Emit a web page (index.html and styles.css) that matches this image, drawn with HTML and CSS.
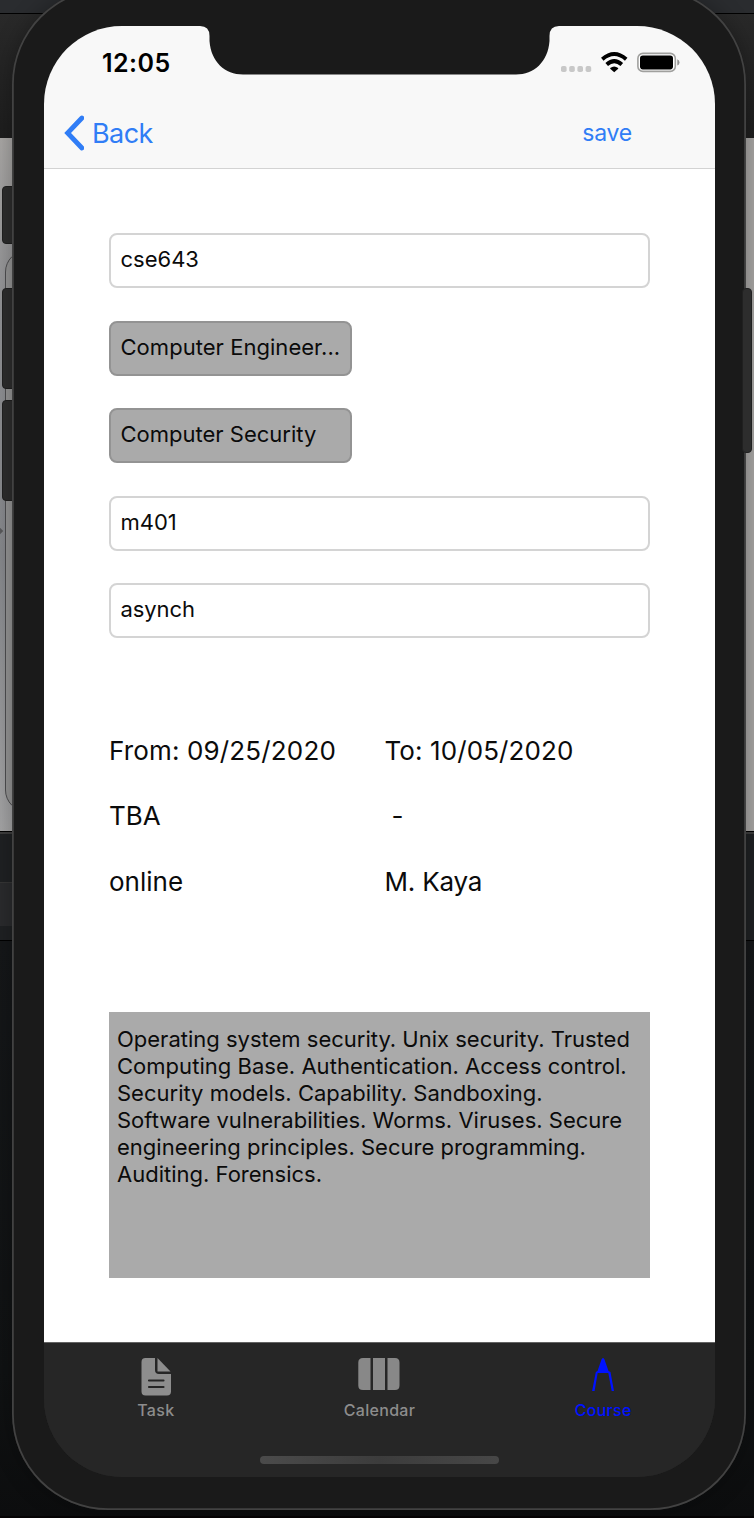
FILE: index.html
```html
<!DOCTYPE html>
<html lang="en">
<head>
<meta charset="utf-8">
<title>Course</title>
<link rel="stylesheet" href="styles.css">
</head>
<body>
<div class="stage">
  <div class="desk">
    <div class="band band-title"></div>
    <div class="band band-tools"></div>
    <div class="band band-photo"><div class="ghost-phone"></div><div class="ghost-mark"></div></div>
    <div class="band band-panel"><div class="panel-chip"></div></div>
    <div class="band band-base"></div>
  </div>
  <div class="key key-mute"></div>
  <div class="key key-up"></div>
  <div class="key key-down"></div>
  <div class="phone">
    <div class="screen">
      <header class="top">
        <div class="status">
          <span class="time">12:05</span>
          <svg class="indicators" width="120" height="24" viewBox="0 0 120 24">
            <g fill="#c8c8c8"><rect x="1" y="16" width="5.6" height="6" rx="1.8"/><rect x="9.2" y="16" width="5.6" height="6" rx="1.8"/><rect x="17.4" y="16" width="5.6" height="6" rx="1.8"/><rect x="25.6" y="16" width="5.6" height="6" rx="1.8"/></g>
            <g fill="none" stroke="#000" stroke-width="3.9"><path d="M42.3 9.2Q54.2 -1 66.2 9.2"/><path d="M46.7 14.5Q54.2 7.7 61.8 14.5"/></g>
            <path d="M50.2 18Q54.2 14.8 58.2 18V18.800L54.2 22.300L50.2 18.800Z"/>
            <rect x="77.9" y="3.4" width="37.4" height="18" rx="5" fill="#fff" stroke="#a0a09e" stroke-width="1.6"/>
            <rect x="80" y="5.6" width="33" height="13.8" rx="2.8"/>
            <path d="M117.3 9.2Q119.500 10 119.500 12.4Q119.500 14.8 117.3 15.6Z" fill="#929292"/>
          </svg>
        </div>
        <nav class="nav">
          <a class="back"><svg width="20" height="36" viewBox="0 0 20 36"><path d="M17.9 3L3.6 18L17.9 33" fill="none" stroke="#307df6" stroke-width="4.8" stroke-linecap="round" stroke-linejoin="miter"/></svg><span>Back</span></a>
          <a class="save">save</a>
        </nav>
      </header>
      <main class="content">
        <div class="fields">
          <div class="field">cse643</div>
          <div class="field muted engineer">Computer Engineer...</div>
          <div class="field muted">Computer Security</div>
          <div class="field">m401</div>
          <div class="field asynch">asynch</div>
        </div>
        <div class="details">
          <span class="from">From: 09/25/2020</span><span class="to">To: 10/05/2020</span>
          <span>TBA</span><span class="dash">-</span>
          <span>online</span><span class="teacher">M. Kaya</span>
        </div>
        <div class="about">
          <div>Operating system security. Unix security. Trusted</div>
          <div class="wide">Computing Base. Authentication. Access control.</div>
          <div>Security models. Capability. Sandboxing.</div>
          <div>Software vulnerabilities. Worms. Viruses. Secure</div>
          <div>engineering principles. Secure programming.</div>
          <div>Auditing. Forensics.</div>
        </div>
      </main>
      <footer class="tabs">
        <div class="tab-row">
          <div class="tab"><svg width="42" height="40" viewBox="0 0 42 40"><path fill="#8d8d8d" d="M10.5 1H20V13Q20 17 24 17H36V34.5Q36 38.5 32 38.5H10.5Q6.5 38.5 6.5 34.5V5Q6.500 1 10.500 1Z"/><path fill="#8d8d8d" d="M22.500 1L35.500 14.500H22.500Z"/><path d="M14 23.500H28.500M14 30H28.500" stroke="#262626" stroke-width="2.2" stroke-linecap="round"/></svg><span>Task</span></div>
          <div class="tab"><svg class="columns" width="42" height="40" viewBox="0 0 42 40"><path fill="#888" d="M5 1H12.500V33H5Q.3 33 .3 28.500V5.500Q.3 1 5 1ZM15 1H27V33H15ZM29.500 1H37Q41.500 1 41.500 5.500V28.500Q41.500 33 37 33H29.500Z"/></svg><span>Calendar</span></div>
          <div class="tab active"><svg width="42" height="40" viewBox="0 0 42 40"><path fill="#0012ff" d="M21 1Q22 1 22.500 2.500L26.500 14L28.500 15L32 34H29.700L26.300 16H15.700L12.600 34H10.100L13.800 15L15.500 14L19.500 2.500Q20 1 21 1Z"/></svg><span>Course</span></div>
        </div>
        <div class="home-bar"></div>
      </footer>
    </div>
    <svg class="notch" width="359" height="52" viewBox="0 0 359 52"><path fill="#1a1a1a" d="M0 0H359V3Q349.500 3 349.500 13V18C348 39 334 51.500 316 51.500H43C25 51.500 11 39 9.500 18V13Q9.500 3 0 3Z"/></svg>
  </div>
  <div class="key key-power"></div>
</div>
</body>
</html>
```

FILE: styles.css
```css
* { box-sizing: border-box; }
body { margin: 0; background: #101214; font-family: Inter, "Liberation Sans", sans-serif; color: #0b0b0b; }
.stage { position: relative; width: 754px; height: 1518px; overflow: hidden; }

/* desktop behind the simulator */
.desk { height: 1518px; display: flex; flex-direction: column; }
.band-title { height: 14px; background: #2a2c2f; border-bottom: 1px solid #000; }
.band-tools { height: 124px; background: linear-gradient(#292929, #1e1e1e); }
.band-photo { height: 693px; position: relative; background: linear-gradient(90deg, transparent 50%, #a8a6a4 50%), linear-gradient(#aaa8a6 0%, #919295 25%, #86888c 60%, #a5a5a6 100%); }
.ghost-phone { position: absolute; left: 5px; top: 112px; width: 300px; height: 562px; border: 1px solid #4e4e50; border-radius: 22px; background: #959595; }
.ghost-mark { position: absolute; left: -4px; top: 390px; width: 6px; height: 6px; background: #59595b; transform: rotate(45deg); }
.band-panel { height: 110px; background: #1f2123; border-top: 1px solid #000; border-bottom: 1px solid #000; box-shadow: inset 0 2px #3d3d3d; padding-top: 50px; }
.panel-chip { width: 40px; height: 44px; background: #2a2b2d; border-top: 1px solid #363636; }
.band-base { flex: 1; background: linear-gradient(#151719, #101213 75%, #0c0d0e); border-bottom: 2px solid #050304; }

/* device */
.key { position: absolute; background: #2d2d2d; border: 1px solid #202020; border-radius: 4px; }
.key-mute { left: 2px; top: 186px; width: 18px; height: 58px; }
.key-up { left: 2px; top: 288px; width: 18px; height: 101px; }
.key-down { left: 2px; top: 400px; width: 18px; height: 101px; }
.key-power { left: 742px; top: 288px; width: 10px; height: 165px; }
.phone { position: absolute; left: 12px; top: -12px; width: 734px; height: 1521.500px; padding: 38px 31px 32.500px 32px; background: #1a1a1a; border-radius: 96px; box-shadow: inset 0 0 0 1.8px #424242, 0 0 22px rgba(0,0,0,.3); }
.screen { width: 671px; height: 1451px; border-radius: 78px; background: #262626; overflow: hidden; display: flex; flex-direction: column; }
.notch { position: absolute; left: 188px; top: 35px; }

.top { height: 143px; background: #f8f8f8; border-bottom: 1px solid #d3d3d3; }
.status { height: 72px; display: flex; justify-content: space-between; padding: 21px 35px 0 58px; }
.time { font-size: 25px; font-weight: 600; line-height: 33px; color: #000; letter-spacing: .45px; }
.indicators { margin-top: 3px; }
.nav { height: 70px; display: flex; justify-content: space-between; align-items: center; padding: 0 83px 0 20px; color: #307df6; }
.back { display: flex; align-items: center; gap: 8px; font-size: 27px; letter-spacing: -.6px; }
.save { font-size: 23px; letter-spacing: -.2px; }

.content { height: 1173px; background: #fff; padding: 64px 65px; display: flex; flex-direction: column; }
.fields { display: flex; flex-direction: column; gap: 32.5px; }
.field { height: 55px; padding: 0 9.500px; border: 2px solid #d4d4d4; border-radius: 8px; font-size: 22px; line-height: 49.500px; white-space: nowrap; }
.muted { width: 243px; background: #aaa; border-color: #939393; }
.engineer { letter-spacing: .04px; }
.asynch { letter-spacing: -.1px; }
.details { margin-top: 80px; display: grid; grid-template-columns: 275.500px 1fr; grid-auto-rows: 65.3px; align-items: center; font-size: 26px; white-space: nowrap; }
.from { letter-spacing: .15px; }
.to { letter-spacing: .1px; }
.teacher { letter-spacing: -.2px; }
.dash { padding-left: 7px; }
.about { margin-top: 98.2px; height: 266px; flex: none; padding: 13.800px 8px; background: #aaa; font-size: 22px; line-height: 27.1px; white-space: nowrap; }
.wide { letter-spacing: .03px; }

.tabs { height: 135px; background: #262626; border-top: 1px solid #636363; display: flex; flex-direction: column; align-items: center; }
.tab-row { width: 671px; height: 113px; display: flex; }
.tab { flex: 1; display: flex; flex-direction: column; align-items: center; padding-top: 14px; font-size: 16px; line-height: 22px; font-weight: 500; color: #8d8d8d; letter-spacing: .3px; }
.tab span { margin-top: 1.500px; }
.columns { margin-left: -1px; }
.active { color: #0012ff; }
.home-bar { width: 239px; height: 8px; border-radius: 4px; background: linear-gradient(90deg, #4b4b4b, #3c3c3c 50%, #474747); }
```
